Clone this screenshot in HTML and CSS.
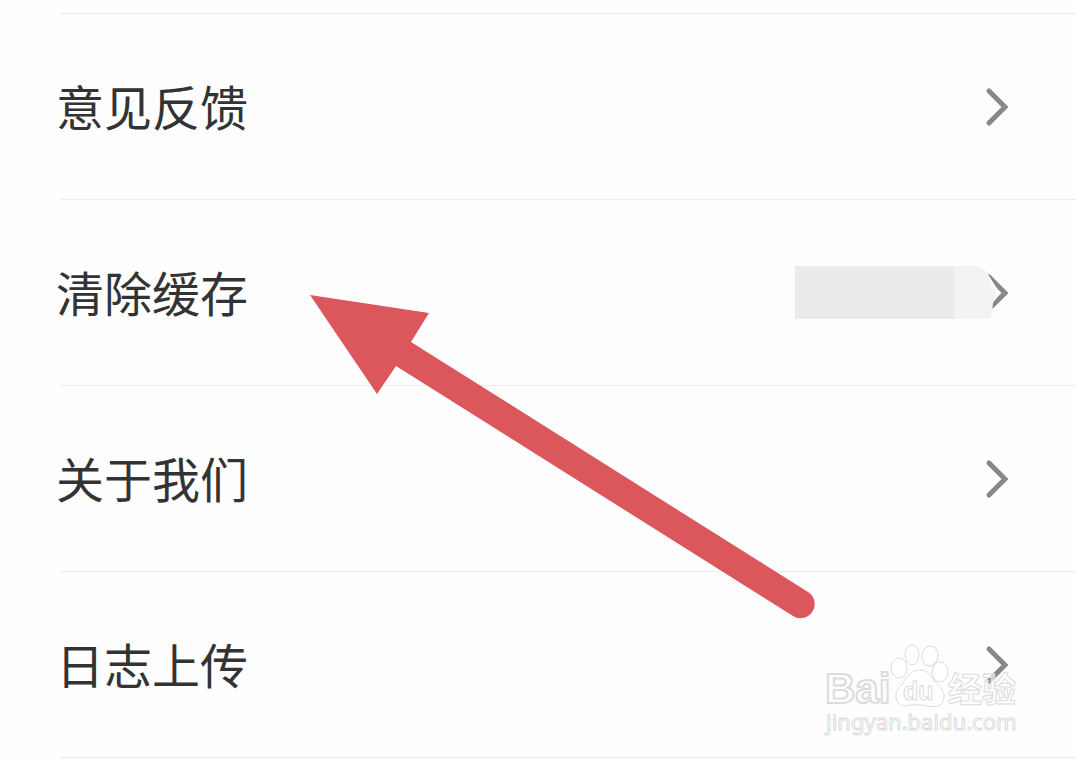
FILE: index.html
```html
<!DOCTYPE html>
<html lang="zh-CN">
<head>
<meta charset="utf-8">
<meta name="viewport" content="width=device-width, initial-scale=1">
<title>设置</title>
<link rel="stylesheet" href="styles.css">
</head>
<body>
<main class="settings">
  <nav class="list">
    <a class="row" href="#feedback">
      <span class="label">意见反馈</span>
      <svg class="chevron" viewBox="0 0 24 40" aria-hidden="true"><path d="M4 4 20 20 4 36"/></svg>
    </a>
    <a class="row" href="#cache">
      <span class="label">清除缓存</span>
      <svg class="masked" viewBox="0 0 216 56" aria-hidden="true">
        <path class="stroke" d="M196 12 212 28 196 44"/>
        <path class="cover" d="M160 0H185L194 8 205 25V31L199 39 200 55H160Z"/>
        <path class="tail" d="M160 1H182Q191 2 194 8L198 19 204 29 200 37 199 48 197 54H160Z"/>
        <path class="block" d="M2 1H161V54H2Z"/>
      </svg>
    </a>
    <a class="row" href="#about">
      <span class="label">关于我们</span>
      <svg class="chevron" viewBox="0 0 24 40" aria-hidden="true"><path d="M4 4 20 20 4 36"/></svg>
    </a>
    <a class="row" href="#logs">
      <span class="label">日志上传</span>
      <svg class="chevron" viewBox="0 0 24 40" aria-hidden="true"><path d="M4 4 20 20 4 36"/></svg>
    </a>
  </nav>
  <svg class="pointer" viewBox="0 0 510 330" aria-hidden="true">
    <path d="M0 0 119 18 101 47 498 297A14 14 0 0 1 483 321L86 71 67 99Z"/>
  </svg>
  <svg class="watermark" viewBox="0 0 200 100" role="img" aria-label="Baidu 经验">
    <text class="brand" x="0" y="61">Bai</text>
    <g class="paw">
      <ellipse cx="74" cy="26" rx="8" ry="10"/>
      <ellipse cx="87" cy="13" rx="7" ry="10"/>
      <ellipse cx="105" cy="14" rx="8" ry="10" transform="rotate(12 105 14)"/>
      <ellipse cx="115" cy="30" rx="8" ry="10"/>
      <path d="M95 28C85 28 82 35 78 41C74 46 70 49 71 56C73 64 79 65 85 63Q95 62 103 64C111 66 119 64 119 55C120 48 113 44 109 38C105 32 102 28 95 28Z"/>
    </g>
    <text class="du" x="78" y="58">du</text>
    <text class="chinese" x="123" y="60">经验</text>
    <text class="site" x="1" y="88">jingyan.baidu.com</text>
  </svg>
</main>
</body>
</html>
```
FILE: styles.css
```css
* {
  box-sizing: border-box;
}

body {
  margin: 0;
  background: #fefefe;
  font-family: "Noto Sans CJK SC", sans-serif;
}

.settings {
  position: relative;
  padding: 13px 0 0 61px;
  overflow: hidden;
}

.list {
  border-top: 1px solid #ebebeb;
}

.row {
  display: flex;
  align-items: center;
  justify-content: space-between;
  height: 186px;
  padding-right: 67px;
  border-bottom: 1px solid #ebebeb;
  color: #333;
  text-decoration: none;
}

.label {
  margin-left: -5px;
  padding-bottom: 4px;
  font-size: 48px;
  line-height: 72px;
}

.chevron,
.masked {
  fill: none;
  stroke: #888;
  stroke-width: 5px;
  stroke-linecap: round;
}

.chevron {
  width: 24px;
  height: 40px;
}

.masked {
  width: 216px;
  height: 56px;
}

.masked .cover {
  fill: #fefefe;
  stroke: none;
}

.masked .tail {
  fill: #f3f3f3;
  stroke: none;
}

.masked .block {
  fill: #ebebeb;
  stroke: none;
}

.pointer {
  position: absolute;
  left: 310px;
  top: 295px;
  width: 510px;
  height: 330px;
  fill: #db575c;
}

.watermark {
  position: absolute;
  right: 51px;
  top: 642px;
  width: 200px;
  height: 100px;
  overflow: visible;
  fill: rgba(255, 255, 255, 0.65);
  stroke: #dcdcdc;
  stroke-width: 1px;
}

.brand {
  font: bold 42px "Liberation Sans", sans-serif;
  stroke-width: 2px;
}

.du {
  font: bold 25px "Liberation Sans", sans-serif;
}

.chinese {
  font: bold 34px "Noto Sans CJK SC", sans-serif;
}

.site {
  font: 22px "Noto Sans", sans-serif;
}
```
